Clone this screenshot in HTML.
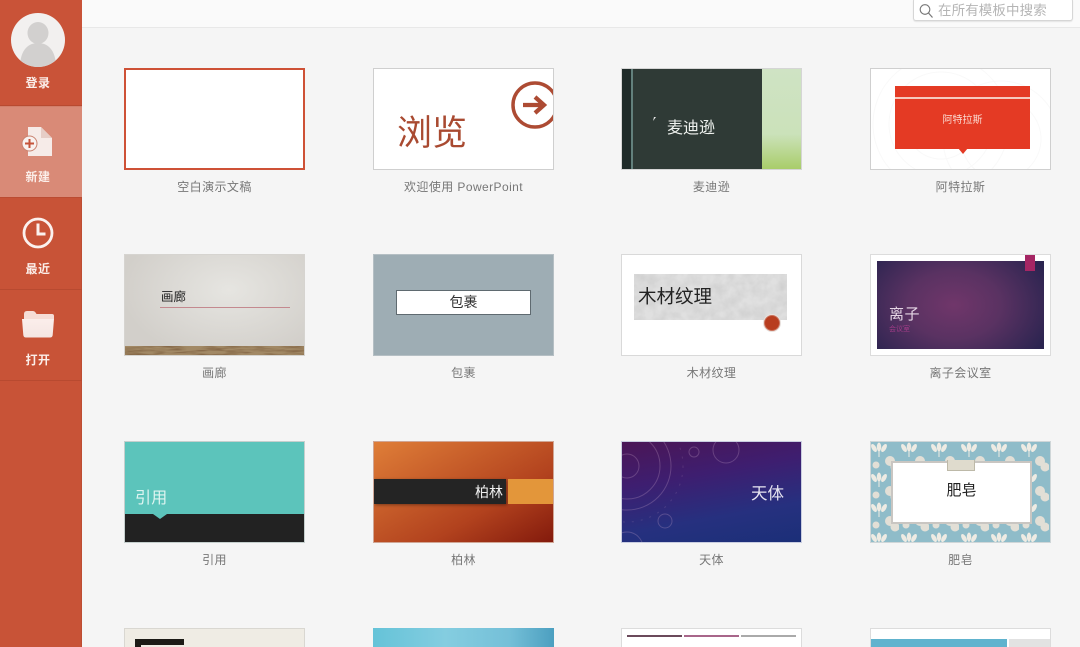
<!DOCTYPE html>
<html lang="zh"><head><meta charset="utf-8"><title>PowerPoint</title>
<style>
*{box-sizing:border-box}
html,body{margin:0;padding:0;width:1080px;height:647px;overflow:hidden;background:#f5f5f5;font-family:"Liberation Sans","Noto Sans CJK SC",sans-serif}
div,svg{position:absolute}
#app{left:0;top:0;width:1080px;height:647px;overflow:hidden;background:#f5f5f5}
.side{left:0;top:0;width:82px;height:647px;background:#c85337;border-right:1px solid #bd4d33}
.sec{left:0;width:82px;border-bottom:1px solid #b84a30}
.nav{left:0;width:76px;text-align:center;color:#fbeee9;font-size:12px;font-weight:700;line-height:14px;letter-spacing:.5px}
.top{left:82px;top:0;width:998px;height:28px;background:#fafafa;border-bottom:1px solid #e8e8e8}
.search{left:913px;top:-2px;width:160px;height:23px;background:#fff;border:1px solid #d6d6d6;border-radius:3px;box-shadow:0 1px 1px #e4e4e4;color:#b5b5b5;font-size:13.500px;line-height:23px;padding-left:24px;letter-spacing:.1px}
.t{width:181px;height:102px;overflow:hidden;border:1px solid #cfcfcf;background:#fff}
.l{width:181px;text-align:center;color:#777;font-size:12px;line-height:16px;letter-spacing:.42px}
.x{white-space:nowrap}
</style></head><body>
<div id="app">
<div class="side"></div>
<div class="sec" style="top:0;height:106px;background:#c95338"></div>
<div class="sec" style="top:106px;height:92px;background:#d98a77;border-top:1px solid #d27f6b;border-bottom:1px solid #bb4c32"></div>
<div class="sec" style="top:198px;height:92px"></div>
<div class="sec" style="top:290px;height:91px"></div>

<svg style="left:11px;top:13px" width="54" height="54" viewBox="0 0 54 54"><defs><clipPath id="av"><circle cx="27" cy="27" r="27"/></clipPath></defs><circle cx="27" cy="27" r="27" fill="#f2f0ef"/><g clip-path="url(#av)" fill="#d2d0cf"><ellipse cx="27" cy="20" rx="10.500" ry="11"/><path d="M9 54c0-14 6-24 18-24s18 10 18 24z"/></g></svg>
<div class="nav" style="top:76px">登录</div>

<svg style="left:21px;top:126px" width="32" height="32" viewBox="0 0 32 32"><path d="M7 1h13l11 11v18H7z" fill="#f6ebe8"/><path d="M20 1v11h11z" fill="#e6cdc6"/><circle cx="8.500" cy="17.500" r="7.500" fill="#f8f1ef" stroke="#c9826f" stroke-width="1"/><path d="M8.500 13v9M4 17.500h9" stroke="#c5533a" stroke-width="2"/></svg>
<div class="nav" style="top:170px">新建</div>

<svg style="left:22px;top:217px" width="32" height="32" viewBox="0 0 32 32"><circle cx="16" cy="16" r="14" fill="none" stroke="#fbf1ee" stroke-width="2.800"/><path d="M16 6.500V17h7.500" fill="none" stroke="#fbf1ee" stroke-width="3"/></svg>
<div class="nav" style="top:262px">最近</div>

<svg style="left:21px;top:310px" width="34" height="29" viewBox="0 0 34 29"><defs><linearGradient id="fg" x1="0" y1="0" x2="0" y2="1"><stop offset="0" stop-color="#fbeeeb"/><stop offset="1" stop-color="#f4e6e3"/></linearGradient></defs><path d="M3 9V4Q3 1 6 1h6q2 0 3.500 3H31q2 0 2 2v3z" fill="#f6ddd6"/><path d="M1 9h32l-1.300 16q-.2 2.500-2.700 2.500H5q-2.500 0-2.700-2.500z" fill="url(#fg)"/></svg>
<div class="nav" style="top:353px">打开</div>

<div class="top"></div>
<div class="search x">在所有模板中搜索</div>
<svg style="left:919px;top:3px" width="14" height="15" viewBox="0 0 14 15"><circle cx="6" cy="6.500" r="4.800" fill="none" stroke="#777" stroke-width="1.100"/><path d="M9.500 10l4 4.500" stroke="#777" stroke-width="1.200"/></svg>

<!-- Row 1 -->
<div class="t" style="left:124px;top:68px;height:102px;border:2px solid #ce5136"></div>
<div class="l" style="left:124px;top:179px">空白演示文稿</div>

<div class="t" style="left:373px;top:68px">
 <div class="x" style="left:23px;top:43px;font-size:35px;line-height:44px;color:#a94a31">浏览</div>
 <svg style="left:130px;top:8px" width="50" height="54" viewBox="0 0 50 54"><circle cx="31" cy="28" r="22" fill="none" stroke="#ad4b33" stroke-width="3.500"/><path d="M19 28h20M31 20l9 8-9 8" fill="none" stroke="#ad4b33" stroke-width="4.200"/></svg>
</div>
<div class="l" style="left:373px;top:179px">欢迎使用 PowerPoint</div>

<div class="t" style="left:621px;top:68px;border:1px solid #d5d5d5;background:#2f3a36">
 <div style="left:0;top:0;width:9px;height:100px;background:#1f2b29"></div>
 <div style="left:9px;top:0;width:2px;height:100px;background:#63807c"></div>
 <div style="left:140px;top:0;width:40px;height:100px;background:linear-gradient(#cfe3c4,#cbe2ba 65%,#a9cd6a)"></div>
 <svg style="left:30px;top:47px" width="5" height="6"><path d="M1 5l1-4h2z" fill="#e6e6e6"/></svg>
 <div class="x" style="left:45px;top:50px;font-size:16px;line-height:20px;color:#f0f3f0">麦迪逊</div>
</div>
<div class="l" style="left:621px;top:179px">麦迪逊</div>

<div class="t" style="left:870px;top:68px">
 <svg style="left:0;top:0" width="180" height="100"><g fill="none" stroke="#f9f9f9"><circle cx="70" cy="55" r="35"/><circle cx="70" cy="55" r="52"/><circle cx="70" cy="55" r="68"/><circle cx="130" cy="70" r="40"/><circle cx="130" cy="70" r="58"/></g></svg>
 <div style="left:24px;top:17px;width:135px;height:63px;background:#e43a24"></div>
 <div style="left:24px;top:28px;width:135px;height:2px;background:#f6c9bd"></div>
 <svg style="left:87px;top:79px" width="10" height="6"><path d="M0 0h10L5 6z" fill="#e43a24"/></svg>
 <div class="x" style="left:24px;top:45px;width:135px;text-align:center;font-size:10px;line-height:14px;color:#fbd9d0">阿特拉斯</div>
</div>
<div class="l" style="left:870px;top:179px">阿特拉斯</div>

<!-- Row 2 -->
<div class="t" style="left:124px;top:254px;border-color:#d6d4d0;background:radial-gradient(ellipse 60% 70% at 58% 35%,#e6e5e1,#d2cfca)">
 <div class="x" style="left:36px;top:34px;font-size:12.500px;line-height:16px;color:#222">画廊</div>
 <div style="left:35px;top:52px;width:130px;height:1px;background:#c4898f"></div>
 <svg style="left:0;top:91px" width="180" height="10"><defs><filter id="wood" x="0" y="0" width="100%" height="100%"><feTurbulence type="fractalNoise" baseFrequency="0.05 0.5" numOctaves="3" seed="4"/><feColorMatrix values="0 0 0 0 .36  0 0 0 0 .25  0 0 0 0 .13  2.200 0 0 0 -.3"/></filter></defs><rect width="180" height="10" fill="#7f6040"/><rect width="180" height="10" filter="url(#wood)"/></svg>
</div>
<div class="l" style="left:124px;top:365px">画廊</div>

<div class="t" style="left:373px;top:254px;background:#9eadb4;border-color:#b5bfc4">
 <div class="x" style="left:22px;top:35px;width:135px;height:25px;background:#fff;border:1px solid #5f6a70;text-align:center;font-size:14px;line-height:23px;color:#333">包裹</div>
</div>
<div class="l" style="left:373px;top:365px">包裹</div>

<div class="t" style="left:621px;top:254px;border-color:#d9d9d9">
 <svg style="left:12px;top:19px" width="153" height="46"><defs><filter id="gr" x="0" y="0" width="100%" height="100%"><feTurbulence type="fractalNoise" baseFrequency="0.09" numOctaves="3" seed="8"/><feColorMatrix values="0 0 0 0 .62  0 0 0 0 .62  0 0 0 0 .62  1.500 0 0 0 -.4"/></filter></defs><rect width="153" height="46" fill="#e0e0e0"/><rect width="153" height="46" filter="url(#gr)"/></svg>
 <div class="x" style="left:16px;top:30px;font-size:18.500px;line-height:24px;color:#222">木材纹理</div>
 <div style="left:142px;top:60px;width:16px;height:16px;border-radius:50%;background:#b83d1f;border:1px solid #c9705a;box-shadow:0 0 0 1px #e8e0dc"></div>
</div>
<div class="l" style="left:621px;top:365px">木材纹理</div>

<div class="t" style="left:870px;top:254px;border-color:#dcdcdc">
 <div style="left:6px;top:6px;width:167px;height:88px;background:radial-gradient(ellipse 62% 85% at 46% 50%,#70366a,#5a3262 45%,#2b2450)"></div>
 <div style="left:154px;top:0;width:10px;height:16px;background:#a52664"></div>
 <div class="x" style="left:18px;top:50px;font-size:15px;line-height:20px;color:#e4d5e4;letter-spacing:.5px">离子</div>
 <div class="x" style="left:18px;top:70px;font-size:7px;line-height:10px;color:#a03c87">会议室</div>
</div>
<div class="l" style="left:870px;top:365px">离子会议室</div>

<!-- Row 3 -->
<div class="t" style="left:124px;top:441px;background:#5cc4bb;border-color:#c5cfcd">
 <div style="left:0;top:72px;width:180px;height:28px;background:#222"></div>
 <svg style="left:28px;top:72px" width="14" height="5"><path d="M0 0h14L7 5z" fill="#5cc4bb"/></svg>
 <div class="x" style="left:10px;top:47px;font-size:16px;line-height:20px;color:#dff5f1;letter-spacing:.3px">引用</div>
</div>
<div class="l" style="left:124px;top:552px">引用</div>

<div class="t" style="left:373px;top:441px;border-color:#d0a695;background:linear-gradient(150deg,#df7e38,#c9602b 32%,#b2421e 65%,#831a0c)">
 <div style="left:0;top:37px;width:132px;height:25px;background:#242424;box-shadow:1px 1px 3px rgba(0,0,0,.4)"></div>
 <div style="left:134px;top:37px;width:46px;height:25px;background:#e3963a"></div>
 <div class="x" style="left:101px;top:41px;font-size:14px;line-height:18px;color:#eee">柏林</div>
</div>
<div class="l" style="left:373px;top:552px">柏林</div>

<div class="t" style="left:621px;top:441px;border-color:#c9cde0;background:linear-gradient(170deg,#4b1656 0,#3e1e70 35%,#26307f 70%,#1b2f78)">
 <svg style="left:0;top:0" width="180" height="100"><g fill="none" stroke="#c9a7c8" stroke-opacity=".28"><circle cx="5" cy="24" r="12"/><circle cx="5" cy="24" r="33"/><circle cx="5" cy="24" r="44"/><circle cx="5" cy="24" r="56" stroke-dasharray="2 7" stroke-opacity=".16"/><circle cx="104" cy="8" r="13"/><circle cx="72" cy="10" r="5"/><circle cx="43" cy="79" r="7"/><circle cx="5" cy="106" r="16"/></g></svg>
 <div class="x" style="left:129px;top:41px;font-size:16.500px;line-height:22px;color:#e6e4f0">天体</div>
</div>
<div class="l" style="left:621px;top:552px">天体</div>

<div class="t" style="left:870px;top:441px;border-color:#cfd6d8;background:#8fbcc9">
 <svg style="left:0;top:0" width="180" height="100"><defs><pattern id="p" width="30" height="30" patternUnits="userSpaceOnUse" x="-2" y="0"><g fill="#eeebe3"><ellipse cx="5" cy="6" rx="2.200" ry="4.500" transform="rotate(-30 5 6)"/><ellipse cx="10" cy="5" rx="2.200" ry="4.500"/><ellipse cx="15" cy="6" rx="2.200" ry="4.500" transform="rotate(30 15 6)"/><path d="M9.500 9h1v6h-1z"/></g><g fill="#e2dfd6"><circle cx="21" cy="19" r="5"/><circle cx="26" cy="25" r="4.500"/><circle cx="7" cy="23" r="3.500"/></g></pattern></defs><rect width="180" height="100" fill="url(#p)"/></svg>
 <div style="left:20px;top:19px;width:141px;height:63px;background:#fff;border:2px solid #c9c6c2"></div>
 <div style="left:76px;top:18px;width:28px;height:11px;background:#dfdbcd;border:1px solid #bdb9a8;border-top:none"></div>
 <div class="x" style="left:20px;top:39px;width:141px;text-align:center;font-size:15px;line-height:20px;color:#222">肥皂</div>
</div>
<div class="l" style="left:870px;top:552px">肥皂</div>

<!-- Row 4 -->
<div class="t" style="left:124px;top:628px;height:40px;background:#efece4;border-color:#d9d7d1">
 <div style="left:10px;top:10px;width:49px;height:30px;border:6px solid #1c1b16;border-right:none;border-bottom:none"></div>
</div>
<div class="t" style="left:373px;top:628px;height:40px;border:none;background:linear-gradient(90deg,#65c3d8,#84cde0 40%,#75c0d8 75%,#4c9fc0)"></div>
<div class="t" style="left:621px;top:628px;height:40px;border-color:#dcdcdc">
 <div style="left:5px;top:6px;width:55px;height:2px;background:#6b4a5b"></div>
 <div style="left:62px;top:6px;width:55px;height:2px;background:#a8668a"></div>
 <div style="left:119px;top:6px;width:55px;height:2px;background:#aaa"></div>
</div>
<div class="t" style="left:870px;top:628px;height:40px;border-color:#dcdcdc">
 <div style="left:0;top:10px;width:136px;height:30px;background:#60b3ce"></div>
 <div style="left:138px;top:10px;width:42px;height:30px;background:#e2e2e2"></div>
</div>
</div>
</body></html>
